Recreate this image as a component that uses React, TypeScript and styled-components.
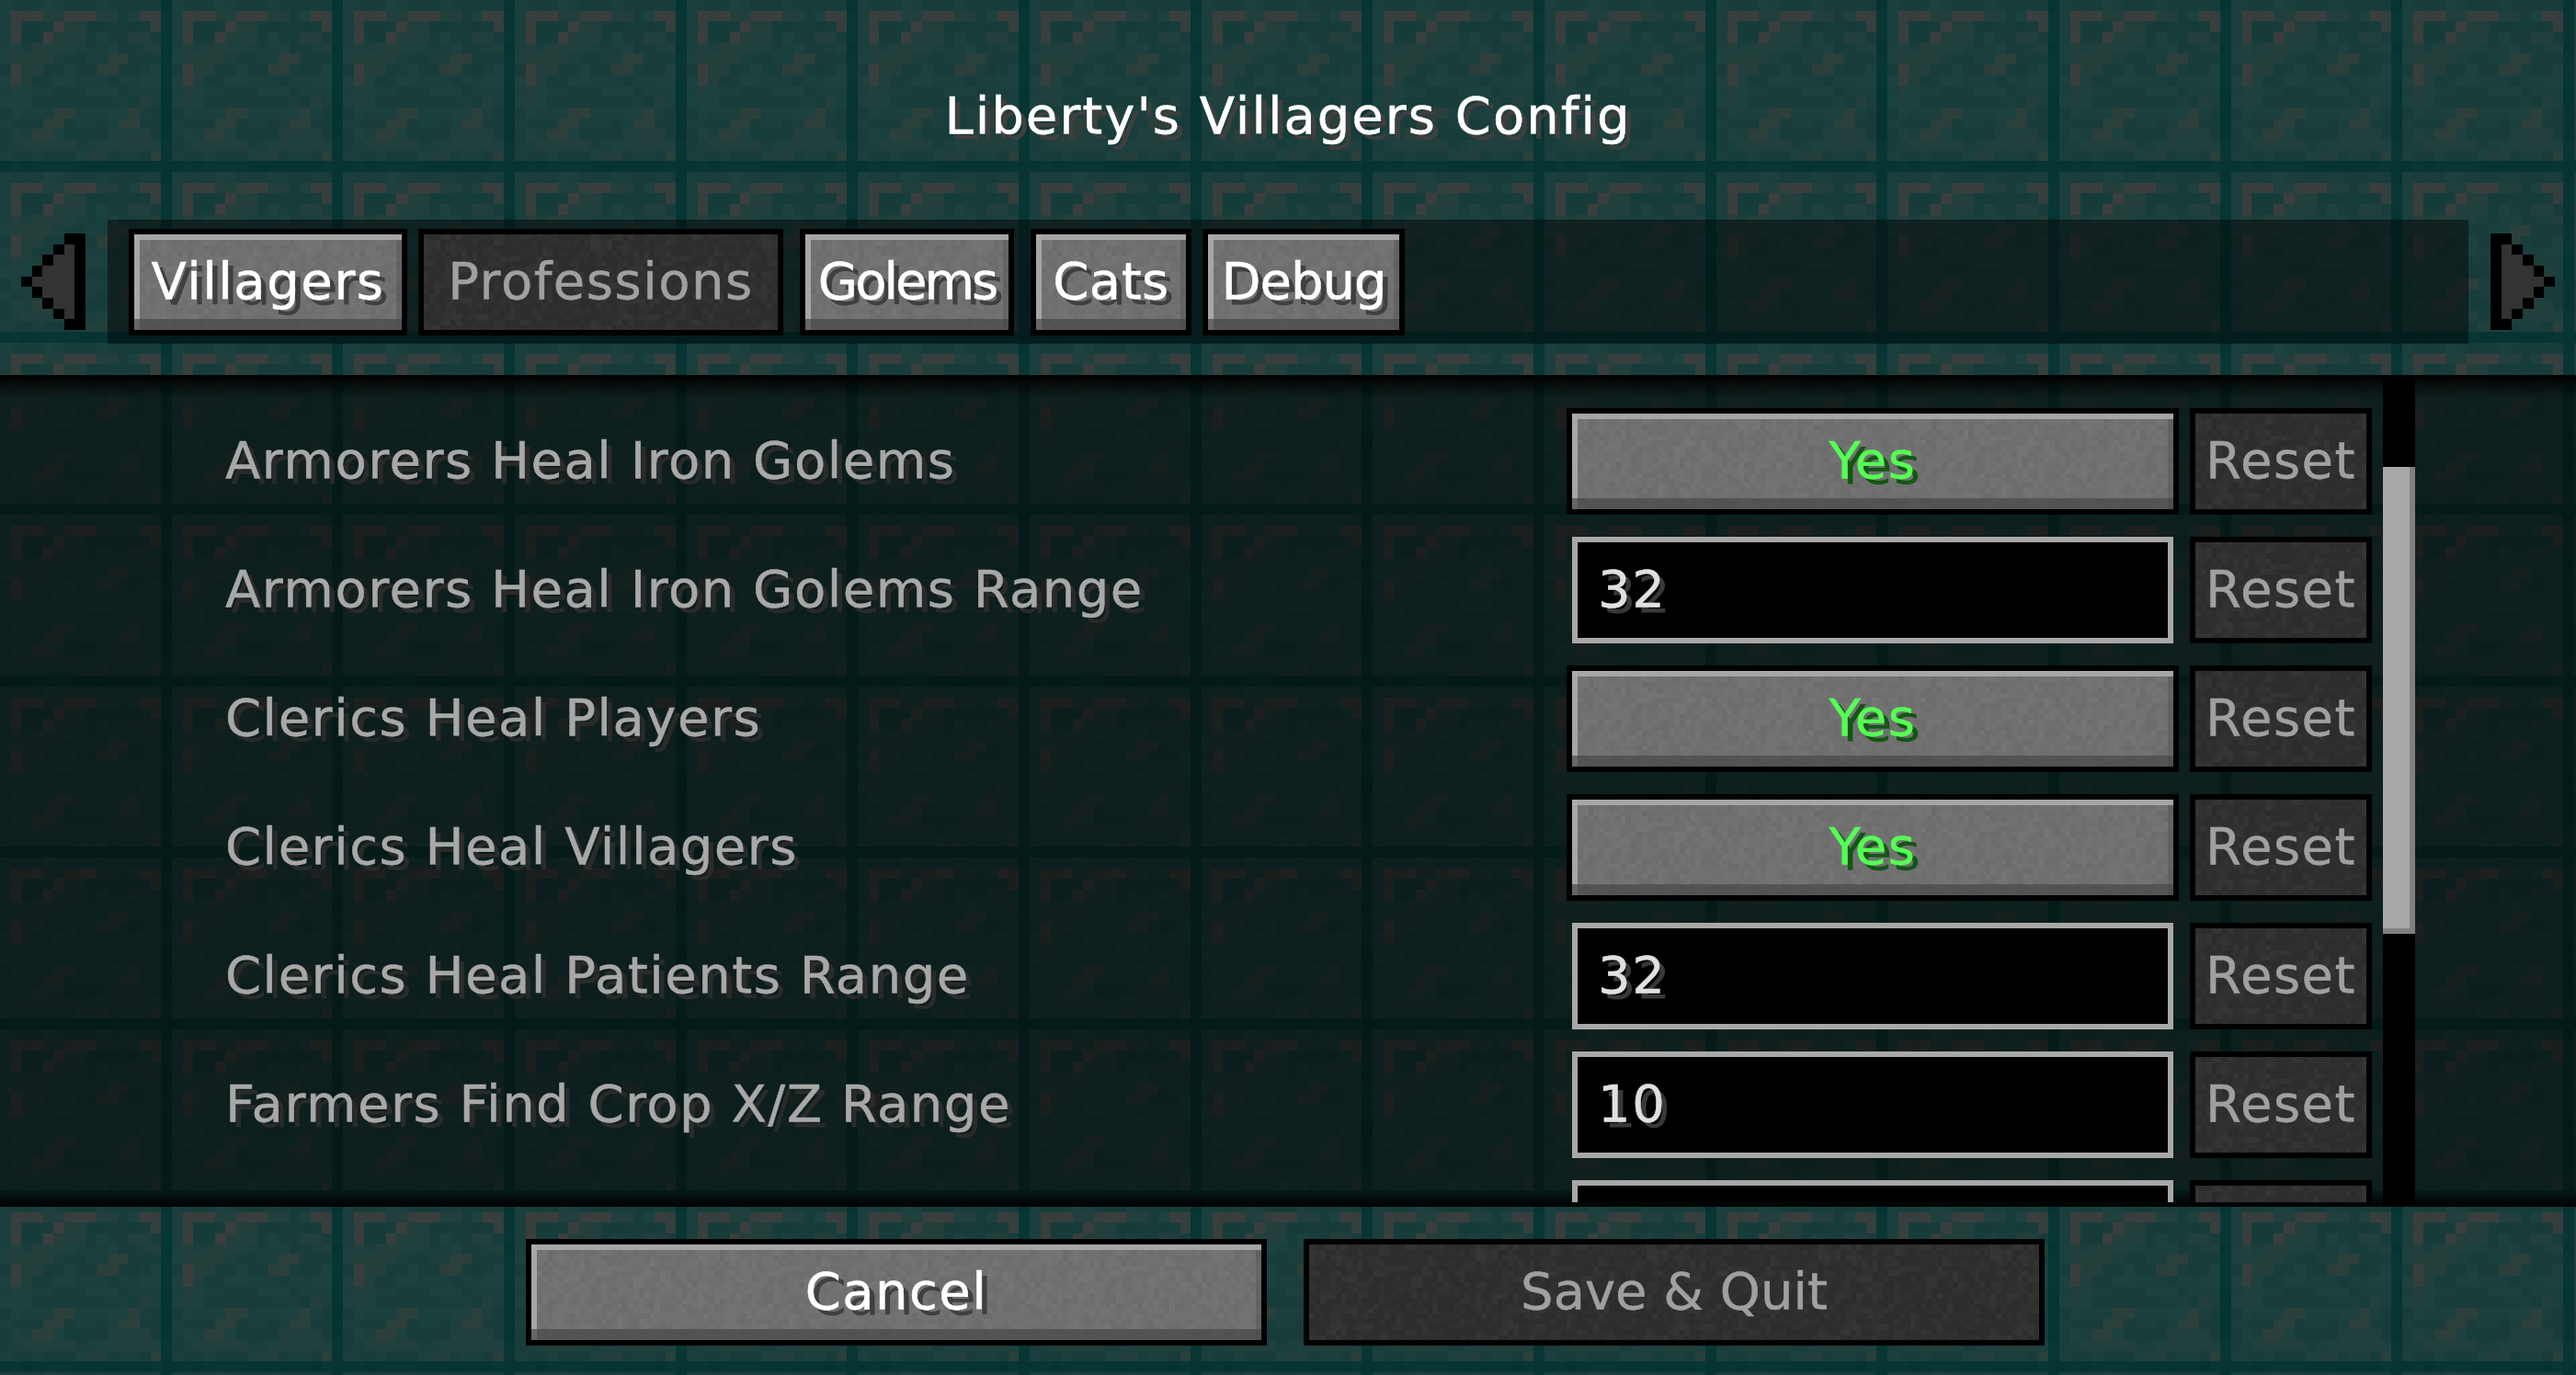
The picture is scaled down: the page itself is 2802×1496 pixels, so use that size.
import React, { FC } from "react";
import styled, { createGlobalStyle, css } from "styled-components";

const seeded = (seed: number) => () => {
  seed = (seed * 16807) % 2147483647;
  return seed / 2147483647;
};

const svgUri = (w: number, h: number, body: string) =>
  `data:image/svg+xml,${encodeURIComponent(
    `<svg xmlns="http://www.w3.org/2000/svg" width="${w}" height="${h}" viewBox="0 0 ${w} ${h}" shape-rendering="crispEdges">${body}</svg>`
  )}`;

// block texture, one char per texel
const TILE = [
  "bbbbbbbbbbbbbbbk",
  "brrrddrrrddbbrrk",
  "brtttrddtttttbrk",
  "brttrdddtbbbddbk",
  "bdbdddbbbbbbbbdk",
  "bddddbbbbbeebbbk",
  "brddbbbbbeebtbbk",
  "brdbbbbbbbbbbbbk",
  "bdbbbbbbbbbbbbbk",
  "bdbbbbbbbbbbbdbk",
  "bbbbbeebbbbbebbk",
  "bbbbeebbbbbeebbk",
  "bbbeebtttbddddbk",
  "bbdddddbbbddddbk",
  "bbbbbbbbddbbbbek",
  "kkkkkkkkkkkkkkkk",
];

const tileUri = (() => {
  const rnd = seeded(7331);
  const shades: Record<string, string[]> = {
    b: ["#1a3f3d", "#193d3b", "#1c413f", "#183c3a"],
    t: ["#163c3a", "#173d3b"],
    d: ["#233f3c", "#213f3c"],
    e: ["#2b3f3b"],
    r: ["#3a3f3e", "#353f3d"],
    k: ["#063433", "#083635"],
  };
  let body = "";
  TILE.forEach((row, y) =>
    row.split("").forEach((c, x) => {
      const list = shades[c];
      const fill = list[Math.floor(rnd() * list.length)];
      body += `<rect x="${x}" y="${y}" width="1" height="1" fill="${fill}"/>`;
    })
  );
  return svgUri(16, 16, body);
})();

const noiseUri = (() => {
  const rnd = seeded(90210);
  let body = "";
  for (let y = 0; y < 16; y++) {
    for (let x = 0; x < 32; x++) {
      const v = rnd();
      const fill = v > 0.5 ? "#fff" : "#000";
      const alpha = (Math.abs(v - 0.5) * 0.07).toFixed(3);
      body += `<rect x="${x}" y="${y}" width="1" height="1" fill="${fill}" fill-opacity="${alpha}"/>`;
    }
  }
  return svgUri(32, 16, body);
})();

const GlobalStyle = createGlobalStyle`
  html, body {
    margin: 0;
    padding: 0;
    background: #1a3f3d;
  }
`;

const Screen = styled.div`
  width: 2802px;
  height: 1496px;
  overflow: hidden;
  display: flex;
  flex-direction: column;
  font-family: "DejaVu Sans", sans-serif;
  font-size: 56px;
  letter-spacing: 1.5px;
  line-height: 1;
  -webkit-text-stroke: 0.5px currentColor;
  background-color: #1a3f3d;
  background-image: url("${tileUri}");
  background-size: 186.667px 186.667px;
`;

type Tone = "white" | "muted" | "label" | "green";

const tones = {
  white: css`
    color: #fff;
    text-shadow: 6px 6px 0 #3f3f3f;
  `,
  muted: css`
    color: #a0a0a0;
  `,
  label: css`
    color: #a8a8a8;
    text-shadow: 6px 6px 0 #2a2a2a;
  `,
  green: css`
    color: #55ff55;
    text-shadow: 6px 6px 0 #155515;
  `,
};

const Title = styled.h1`
  height: 239px;
  margin: 0;
  padding-top: 98px;
  box-sizing: border-box;
  text-align: center;
  font-size: inherit;
  font-weight: normal;
  letter-spacing: 2px;
  ${tones.white}
`;

const TabRow = styled.div`
  height: 135px;
  padding: 0 23px;
  display: flex;
  align-items: center;
  gap: 24px;
`;

const ArrowIcon = styled.svg<{ $flip?: boolean }>`
  width: 70px;
  height: 105px;
  flex: none;
  transform: ${(p) => (p.$flip ? "scaleX(-1)" : "none")};
`;

const TabStrip = styled.div`
  flex: 1;
  align-self: stretch;
  padding-left: 23px;
  display: flex;
  align-items: center;
  background: rgba(0, 0, 0, 0.45);
`;

const Button = styled.div<{ $width: number; $on?: boolean; $after?: number }>`
  width: ${(p) => p.$width}px;
  height: 116px;
  flex: none;
  box-sizing: border-box;
  margin-right: ${(p) => p.$after ?? 0}px;
  padding-bottom: 2px;
  border: 6px solid #000;
  display: flex;
  align-items: center;
  justify-content: center;
  ${(p) =>
    p.$on
      ? css`
          background:
            linear-gradient(rgba(68, 68, 68, 0.65), rgba(68, 68, 68, 0.65)) bottom / 100% 12px no-repeat,
            linear-gradient(rgba(172, 172, 172, 0.9), rgba(172, 172, 172, 0.9)) top / 100% 6px no-repeat,
            linear-gradient(rgba(172, 172, 172, 0.9), rgba(172, 172, 172, 0.9)) left / 6px 100% no-repeat,
            linear-gradient(rgba(0, 0, 0, 0.12), rgba(0, 0, 0, 0.12)) right / 6px 100% no-repeat,
            url("${noiseUri}") 0 0 / 186.667px 93.333px,
            #707070;
        `
      : css`
          background: url("${noiseUri}") 0 0 / 186.667px 93.333px, #2e2e2e;
        `}
`;

const Label = styled.span<{ $tone: Tone; $spacing?: number }>`
  white-space: nowrap;
  letter-spacing: ${(p) => p.$spacing ?? 1.5}px;
  ${(p) => tones[p.$tone]}
`;

const ListPane = styled.div`
  margin-top: 34px;
  height: 905px;
  flex: none;
  display: flex;
  position: relative;
  background: rgba(0, 0, 0, 0.5);

  &::before,
  &::after {
    content: "";
    position: absolute;
    left: 0;
    right: 0;
    pointer-events: none;
  }

  &::before {
    top: 0;
    height: 25px;
    background: linear-gradient(#000, transparent);
  }

  &::after {
    bottom: 0;
    height: 18px;
    background: linear-gradient(transparent, #000);
  }
`;

const Rows = styled.div`
  width: 2592px;
  height: 900px;
  flex: none;
  padding: 36px 12px 0 245px;
  box-sizing: border-box;
  overflow: hidden;
  position: relative;
  z-index: 1;
  display: flex;
  flex-direction: column;
  gap: 24px;
`;

const Row = styled.div`
  height: 116px;
  flex: none;
  display: flex;
  align-items: center;
`;

const RowLabel = styled(Label)`
  flex: 1;
  padding-bottom: 3px;
`;

const Slot = styled.div`
  width: 666px;
  margin-right: 12px;
  flex: none;
  display: flex;
  justify-content: center;
`;

const Field = styled.input`
  width: 654px;
  height: 116px;
  box-sizing: border-box;
  padding: 0 0 3px 22px;
  border: 6px solid #a8a8a8;
  border-radius: 0;
  outline: none;
  background: #000;
  font: inherit;
  letter-spacing: inherit;
  color: #e0e0e0;
  text-shadow: 6px 6px 0 #383838;
`;

const Track = styled.div`
  width: 35px;
  position: relative;
  z-index: 1;
  flex: none;
  background: #000;
  padding-top: 100px;
  box-sizing: border-box;
`;

const Thumb = styled.div`
  height: 508px;
  box-sizing: border-box;
  background: #a8a8a8;
  box-shadow: inset -6px -6px 0 #808080;
`;

const Footer = styled.div`
  padding: 35px 0 0 572px;
  display: flex;
`;

type Tab = { name: string; width: number; after: number; on: boolean; spacing?: number };

const TABS: Tab[] = [
  { name: "Villagers", width: 303, after: 12, on: true },
  { name: "Professions", width: 397, after: 18, on: false },
  { name: "Golems", width: 233, after: 18, on: true, spacing: -3 },
  { name: "Cats", width: 175, after: 12, on: true, spacing: 0.5 },
  { name: "Debug", width: 220, after: 0, on: true, spacing: -1 },
];

type Option = { label?: string; toggle?: string; number?: string };

const OPTIONS: Option[] = [
  { label: "Armorers Heal Iron Golems", toggle: "Yes" },
  { label: "Armorers Heal Iron Golems Range", number: "32" },
  { label: "Clerics Heal Players", toggle: "Yes" },
  { label: "Clerics Heal Villagers", toggle: "Yes" },
  { label: "Clerics Heal Patients Range", number: "32" },
  { label: "Farmers Find Crop X/Z Range", number: "10" },
  // only the top edge of the next row is scrolled into view
  { number: "" },
];

const Arrow: FC<{ flip?: boolean }> = ({ flip }) => (
  <ArrowIcon $flip={flip} viewBox="0 0 6 9" shapeRendering="crispEdges">
    <path d="M4 0h2v9H4V8H3V7H2V6H1V5H0V4h1V3h1V2h1V1h1z" fill="#000" />
    <path d="M5 1H4v1H3v1H2v1H1v1h1v1h1v1h1v1h1z" fill="#333" />
  </ArrowIcon>
);

export default function App() {
  return (
    <Screen>
      <GlobalStyle />
      <Title>Liberty's Villagers Config</Title>
      <TabRow>
        <Arrow />
        <TabStrip>
          {TABS.map((t) => (
            <Button key={t.name} $width={t.width} $after={t.after} $on={t.on}>
              <Label $tone={t.on ? "white" : "muted"} $spacing={t.spacing}>
                {t.name}
              </Label>
            </Button>
          ))}
        </TabStrip>
        <Arrow flip />
      </TabRow>
      <ListPane>
        <Rows>
          {OPTIONS.map((o, i) => (
            <Row key={i}>
              <RowLabel $tone="label">{o.label}</RowLabel>
              <Slot>
                {o.toggle ? (
                  <Button $width={666} $on>
                    <Label $tone="green">{o.toggle}</Label>
                  </Button>
                ) : (
                  <Field readOnly value={o.number} />
                )}
              </Slot>
              <Button $width={198}>{o.label && <Label $tone="muted">Reset</Label>}</Button>
            </Row>
          ))}
        </Rows>
        <Track>
          <Thumb />
        </Track>
      </ListPane>
      <Footer>
        <Button $width={806} $after={40} $on>
          <Label $tone="white">Cancel</Label>
        </Button>
        <Button $width={806}>
          <Label $tone="muted" $spacing={0}>
            Save &amp; Quit
          </Label>
        </Button>
      </Footer>
    </Screen>
  );
}
